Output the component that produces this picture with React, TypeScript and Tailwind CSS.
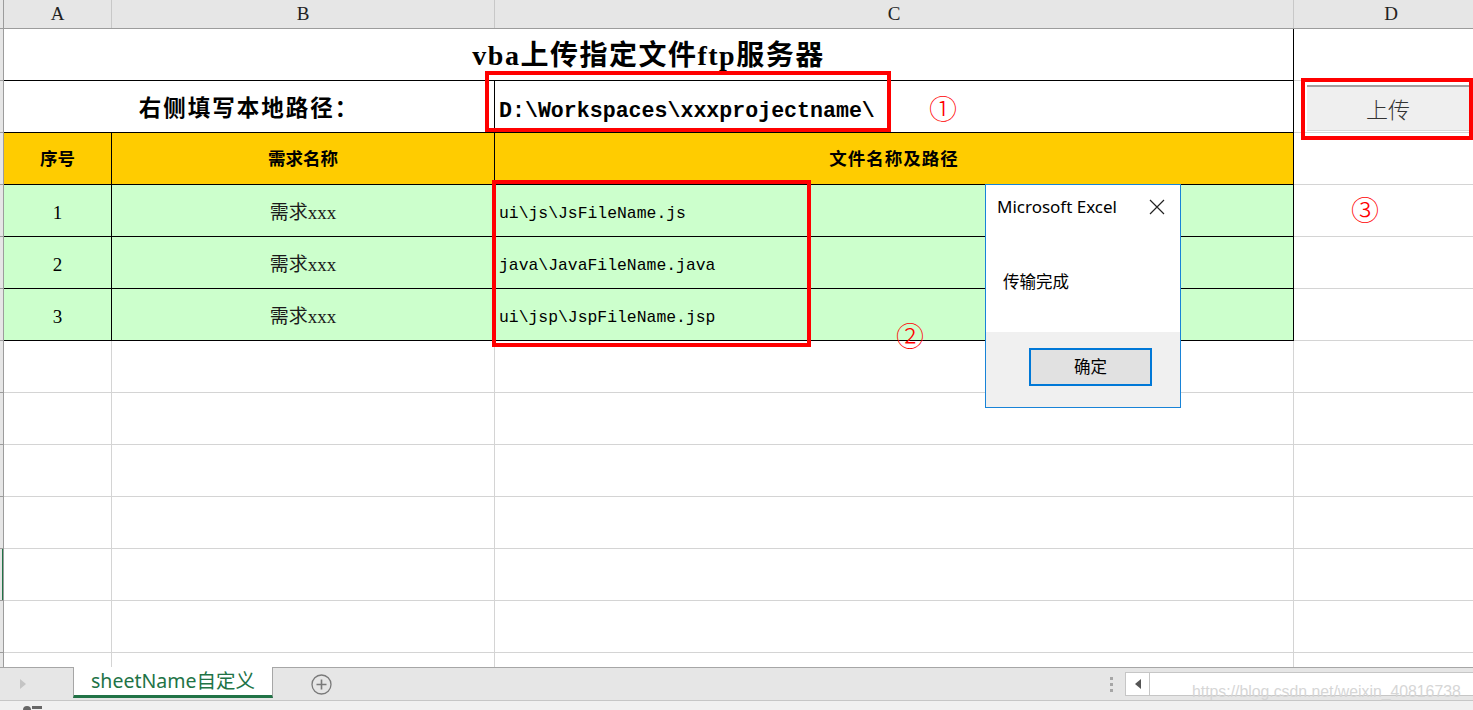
import React from "react";

const serif = "font-['Liberation_Serif','Noto_Sans_CJK_SC',serif]";
const mono = "font-['Liberation_Mono','Noto_Sans_CJK_SC',monospace]";
const sans = "font-['Noto_Sans','Noto_Sans_CJK_SC',sans-serif]";

const files = [
  { no: "1", name: "需求xxx", path: "ui\\js\\JsFileName.js" },
  { no: "2", name: "需求xxx", path: "java\\JavaFileName.java" },
  { no: "3", name: "需求xxx", path: "ui\\jsp\\JspFileName.jsp" },
];

function Strip({ active = false }: { active?: boolean }) {
  return (
    <div className="w-[4px] h-full shrink-0 bg-[#e6e6e6] border-r border-b border-[#9c9c9c] flex">
      {active && <div className="ml-[2px] w-[2px] h-full bg-[#217346]" />}
    </div>
  );
}

function EmptyRow({ active = false }: { active?: boolean }) {
  return (
    <div className="flex h-[52px] shrink-0">
      <Strip active={active} />
      <div className="w-[108px] shrink-0 border-r border-b border-[#d4d4d4]" />
      <div className="w-[383px] shrink-0 border-r border-b border-[#d4d4d4]" />
      <div className="w-[799px] shrink-0 border-r border-b border-[#d4d4d4]" />
      <div className="w-[194px] shrink-0 border-b border-[#d4d4d4]" />
    </div>
  );
}

export default function App() {
  return (
    <div className="relative w-[1473px] h-[710px] overflow-hidden bg-white flex flex-col">
      {/* sheet */}
      <div className="h-[667px] overflow-hidden flex flex-col shrink-0">
        {/* column letters */}
        <div className={`flex h-[29px] shrink-0 bg-[#e6e6e6] border-b border-[#9c9c9c] text-[19px] text-[#222] ${serif}`}>
          <div className="w-[4px] shrink-0 border-r border-[#9c9c9c]" />
          <div className="w-[108px] shrink-0 border-r border-[#c8c8c8] flex items-center justify-center">A</div>
          <div className="w-[383px] shrink-0 border-r border-[#c8c8c8] flex items-center justify-center">B</div>
          <div className="w-[799px] shrink-0 border-r border-[#c8c8c8] flex items-center justify-center">C</div>
          <div className="w-[194px] shrink-0 flex items-center justify-center">D</div>
        </div>

        {/* title */}
        <div className="flex h-[52px] shrink-0">
          <Strip />
          <div className={`w-[1290px] shrink-0 border-r border-b border-black flex items-center justify-center pt-[2px] text-[28px] font-bold tracking-[1.5px] text-black ${serif}`}>
            vba上传指定文件ftp服务器
          </div>
          <div className="w-[194px] shrink-0 border-b border-[#d4d4d4]" />
        </div>

        {/* local path */}
        <div className="flex h-[52px] shrink-0">
          <Strip />
          <div className={`w-[491px] shrink-0 border-r border-b border-black flex items-center justify-center pt-[4px] text-[22.5px] font-bold tracking-[2px] text-black ${serif}`}>
            右侧填写本地路径：
          </div>
          <div className={`w-[799px] shrink-0 border-r border-b border-black flex items-center pl-[4px] pt-[9px] text-[21.6px] font-bold text-black ${mono}`}>
            D:\Workspaces\xxxprojectname\
          </div>
          <div className="w-[194px] shrink-0 border-b border-[#d4d4d4]" />
        </div>

        {/* table header */}
        <div className={`flex h-[52px] shrink-0 text-[17.5px] font-bold text-black ${serif}`}>
          <Strip />
          <div className="w-[108px] shrink-0 bg-[#ffcc00] border-r border-b border-black flex items-center justify-center pt-[2px]">序号</div>
          <div className="w-[383px] shrink-0 bg-[#ffcc00] border-r border-b border-black flex items-center justify-center pt-[2px]">需求名称</div>
          <div className="w-[799px] shrink-0 bg-[#ffcc00] border-r border-b border-black flex items-center justify-center pt-[2px] tracking-[1px]">
            文件名称及路径
          </div>
          <div className="w-[194px] shrink-0 border-b border-[#d4d4d4]" />
        </div>

        {files.map((f) => (
          <div key={f.no} className="flex h-[52px] shrink-0 text-black">
            <Strip />
            <div className={`w-[108px] shrink-0 bg-[#ccffcc] border-r border-b border-black flex items-center justify-center pt-[5px] text-[19px] ${serif}`}>
              {f.no}
            </div>
            <div className={`w-[383px] shrink-0 bg-[#ccffcc] border-r border-b border-black flex items-center justify-center pt-[5px] text-[19px] text-[#1a1a1a] ${serif}`}>
              {f.name}
            </div>
            <div className={`w-[799px] shrink-0 bg-[#ccffcc] border-r border-b border-black flex items-center pl-[4px] pt-[7px] text-[16.4px] ${mono}`}>
              {f.path}
            </div>
            <div className="w-[194px] shrink-0 border-b border-[#d4d4d4]" />
          </div>
        ))}

        {[0, 1, 2, 3, 4, 5, 6].map((i) => (
          <EmptyRow key={i} active={i === 4} />
        ))}
      </div>

      {/* sheet tabs */}
      <div className="flex h-[33px] shrink-0 bg-[#e6e6e6] border-t border-[#a6a6a6]">
        <div className="w-[73px] shrink-0 flex items-center pl-[20px]">
          <svg width="6" height="10" viewBox="0 0 6 10">
            <path d="M0 0 L6 5 L0 10 Z" fill="#c4c4c4" />
          </svg>
        </div>
        <div className={`-mt-px w-[200px] shrink-0 h-[31px] bg-white border-x border-[#a6a6a6] border-b-[3px] border-b-[#217346] flex items-center justify-center text-[19.5px] text-[#217346] ${sans}`}>
          sheetName自定义
        </div>
        <div className="w-[96px] shrink-0 flex items-center justify-center">
          <svg width="21" height="21" viewBox="0 0 21 21">
            <circle cx="10.5" cy="10.5" r="9.5" fill="none" stroke="#7a7a7a" strokeWidth="1.3" />
            <path d="M10.5 5.5 V15.5 M5.5 10.5 H15.5" stroke="#7a7a7a" strokeWidth="1.6" />
          </svg>
        </div>
        <div className="flex-1" />
        <div className="w-[20px] shrink-0 flex flex-col items-center justify-center gap-[3px] mr-[4px]">
          <div className="w-[3px] h-[3px] bg-[#a6a6a6]" />
          <div className="w-[3px] h-[3px] bg-[#a6a6a6]" />
          <div className="w-[3px] h-[3px] bg-[#a6a6a6]" />
        </div>
        <div className="flex items-center shrink-0">
          <div className="w-[25px] h-[24px] bg-white border border-[#c6c6c6] flex items-center justify-center">
            <svg width="6" height="10" viewBox="0 0 6 10">
              <path d="M6 0 L0 5 L6 10 Z" fill="#555" />
            </svg>
          </div>
          <div className="w-[323px] h-[24px] bg-white border-y border-[#c6c6c6]" />
        </div>
      </div>

      {/* status bar */}
      <div className="h-[10px] shrink-0 bg-[#f0f0f0] border-t border-[#c6c6c6] flex items-end pl-[22px]">
        <svg width="22" height="6" viewBox="0 0 22 6">
          <circle cx="5" cy="6" r="4" fill="#666" />
          <rect x="10" y="2" width="10" height="3" fill="#666" />
        </svg>
      </div>

      {/* watermark */}
      <div className="absolute left-[1192px] top-[680px] whitespace-nowrap text-[15.8px] text-[#d6d6d6] font-['Liberation_Sans',sans-serif]">
        https://blog.csdn.net/weixin_40816738
      </div>

      {/* upload button */}
      <div className="absolute left-[1307px] top-[85px] w-[162px] h-[46px] bg-[#efefef] border-t-2 border-[#a0a0a0] border-b border-b-[#d8d8d8] flex items-center justify-center text-[22px] text-[#333] font-['Noto_Sans_CJK_SC',sans-serif] font-light">
        上传
      </div>

      {/* annotation boxes */}
      <div className="absolute left-[485px] top-[71px] w-[406px] h-[61px] border-[4px] border-[#ff0000]" />
      <div className="absolute left-[492px] top-[180px] w-[319px] h-[167px] border-[4px] border-[#ff0000]" />
      <div className="absolute left-[1301px] top-[78px] w-[172px] h-[62px] border-[4px] border-[#ff0000]" />

      <div className="absolute left-[929px] top-[90px] text-[28px] leading-[36px] text-[#ff0000] font-['Noto_Sans_CJK_SC',sans-serif] font-light">①</div>
      <div className="absolute left-[896px] top-[317px] text-[28px] leading-[36px] text-[#ff0000] font-['Noto_Sans_CJK_SC',sans-serif] font-light">②</div>
      <div className="absolute left-[1351px] top-[191px] text-[28px] leading-[36px] text-[#ff0000] font-['Noto_Sans_CJK_SC',sans-serif] font-light">③</div>

      {/* message box */}
      <div className={`absolute left-[985px] top-[184px] w-[196px] h-[224px] bg-white border border-[#1883d7] flex flex-col ${sans}`}>
        <div className="flex-1 flex flex-col">
          <div className="flex items-center justify-between pl-[11px] pr-[14px] pt-[9px]">
            <span className="text-[17px] text-black">Microsoft Excel</span>
            <svg width="18" height="18" viewBox="0 0 18 18">
              <path d="M2 2 L16 16 M16 2 L2 16" stroke="#222" strokeWidth="1.2" />
            </svg>
          </div>
          <div className="pl-[17px] pt-[50px] text-[16.5px] text-black">传输完成</div>
        </div>
        <div className="h-[75px] bg-[#f0f0f0] flex pl-[43px] pt-[16px]">
          <div className="w-[123px] h-[38px] bg-[#e1e1e1] border-2 border-[#0078d7] flex items-center justify-center text-[16.5px] text-black">
            确定
          </div>
        </div>
      </div>
    </div>
  );
}
